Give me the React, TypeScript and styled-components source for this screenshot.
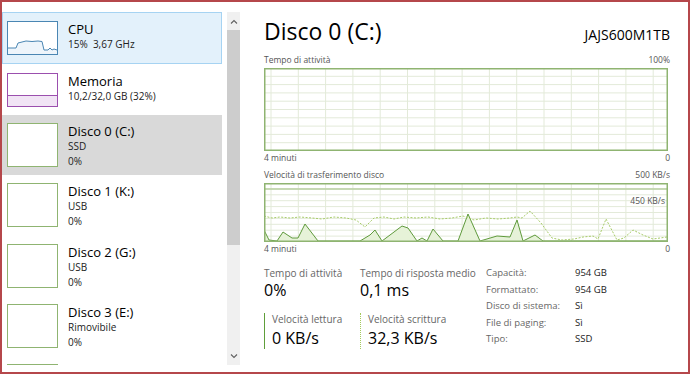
import React from "react";
import styled, { createGlobalStyle } from "styled-components";

const GlobalStyle = createGlobalStyle`
  html, body {
    margin: 0;
    padding: 0;
    background: #ffffff;
  }
  body {
    font-family: "Open Sans", "Noto Sans", sans-serif;
    color: #000;
  }
`;

const Frame = styled.div`
  box-sizing: border-box;
  width: 690px;
  height: 374px;
  border: 2px solid #b5474b;
  display: flex;
  overflow: hidden;
  background: #fff;
`;

/* ---------- sidebar ---------- */

const Sidebar = styled.div`
  width: 240px;
  display: flex;
  padding-top: 10px;
  box-sizing: border-box;
`;

const List = styled.div`
  width: 220px;
  height: 353px;
  overflow: hidden;
  display: flex;
  flex-direction: column;
`;

const Item = styled.div<{ $state?: "hover" | "selected"; $tall?: boolean }>`
  box-sizing: border-box;
  height: ${(p) => (p.$tall ? 60.3 : 51.5)}px;
  flex-shrink: 0;
  display: flex;
  align-items: flex-start;
  gap: 10px;
  padding: ${(p) => (p.$tall ? "7px 4px" : "8px 4px")};
  border: 1px solid ${(p) => (p.$state === "hover" ? "#a6d3f2" : "transparent")};
  background: ${(p) =>
    p.$state === "hover" ? "#e3f1fb" : p.$state === "selected" ? "#d9d9d9" : "transparent"};
`;

const Thumb = styled.div<{ $color: string; $tall?: boolean }>`
  box-sizing: border-box;
  width: 51px;
  height: ${(p) => (p.$tall ? 44 : 34)}px;
  flex-shrink: 0;
  border: 1px solid ${(p) => p.$color};
  background: #fff;
  position: relative;
  overflow: hidden;
  display: flex;
  flex-direction: column;
  justify-content: flex-end;
`;

const MemFill = styled.div`
  height: 10px;
  border-top: 1px solid #9b4fae;
  background: #f1e4f5;
`;

const ItemText = styled.div`
  display: flex;
  flex-direction: column;
`;

const ItemName = styled.div`
  font-size: 13px;
  line-height: 16px;
  color: #000;
`;

const ItemSub = styled.div`
  font-size: 10px;
  line-height: 15px;
  color: #222;
`;

const Scrollbar = styled.div`
  margin-left: 5px;
  width: 13px;
  height: 353px;
  background: #f0f0f0;
  display: flex;
  flex-direction: column;
  align-items: center;
`;

const ScrollArrow = styled.div`
  height: 18px;
  width: 13px;
  display: flex;
  align-items: center;
  justify-content: center;
  flex-shrink: 0;
`;

const ScrollThumb = styled.div`
  width: 13px;
  height: 215px;
  background: #cdcdcd;
  flex-shrink: 0;
`;

const ScrollTrack = styled.div`
  flex: 1;
`;

/* ---------- main ---------- */

const Main = styled.div`
  flex: 1;
  padding: 0 18px 0 22px;
  display: flex;
  flex-direction: column;
`;

const Header = styled.div`
  display: flex;
  justify-content: space-between;
  align-items: baseline;
  margin-top: 14px;
  height: 34px;
`;

const Title = styled.div`
  font-size: 23px;
  line-height: 30px;
  color: #000;
`;

const Model = styled.div`
  font-size: 14px;
  color: #000;
`;

const Caption = styled.div<{ $gap?: number }>`
  display: flex;
  justify-content: space-between;
  font-size: 8.5px;
  line-height: 12px;
  color: #555;
  margin-top: ${(p) => p.$gap ?? 0}px;
`;

const Graph = styled.div<{ $h: number }>`
  position: relative;
  width: 404px;
  height: ${(p) => p.$h}px;
  margin: 2px 0 1px;
`;

const GraphMark = styled.div`
  position: absolute;
  right: 3px;
  top: 12px;
  font-size: 8.5px;
  color: #555;
`;

const Stats = styled.div`
  display: grid;
  grid-template-columns: 96px 126px 1fr;
  margin-top: 12px;
`;

const StatCol = styled.div`
  display: flex;
  flex-direction: column;
`;

const StatLabel = styled.div`
  font-size: 10px;
  line-height: 12px;
  color: #666;
`;

const StatValue = styled.div`
  font-size: 16px;
  line-height: 22px;
  color: #000;
`;

const Speed = styled.div<{ $dotted?: boolean }>`
  margin-top: 12px;
  padding-left: 7px;
  border-left: 1.5px ${(p) => (p.$dotted ? "dotted #a4c95c" : "solid #5f9e3a")};
  height: 36px;
  display: flex;
  flex-direction: column;
  justify-content: space-between;
`;

const Props = styled.div`
  display: grid;
  grid-template-columns: 89px 1fr;
  grid-auto-rows: 16.5px;
  font-size: 9.5px;
  line-height: 12px;
`;

const PropKey = styled.div`
  color: #666;
`;

const PropVal = styled.div`
  color: #222;
`;

/* ---------- drawings ---------- */

const Grid: React.FC<{ w: number; h: number; rows: number }> = ({ w, h, rows }) => {
  const v: number[] = [];
  for (let x = 7; x < w; x += 27.3) v.push(x);
  const hz: number[] = [];
  for (let i = 1; i < rows; i++) hz.push((h / rows) * i);
  return (
    <g stroke="#e3ead9" strokeWidth={1}>
      {v.map((x) => (
        <line key={"v" + x} x1={x} y1={0} x2={x} y2={h} />
      ))}
      {hz.map((y) => (
        <line key={"h" + y} x1={0} y1={y} x2={w} y2={y} />
      ))}
    </g>
  );
};

const ActivityChart = () => (
  <svg width={404} height={83} style={{ display: "block" }}>
    <Grid w={404} h={83} rows={10} />
    <rect x={0.75} y={0.75} width={402.5} height={81.5} fill="none" stroke="#8fb471" strokeWidth={1.5} />
  </svg>
);

const writePts: [number, number][] = [
  [0, 33], [8, 35], [16, 34], [26, 35], [36, 34], [48, 35], [58, 36], [70, 34], [82, 35], [92, 37],
  [101, 44], [110, 35], [120, 34], [130, 36], [140, 34], [152, 35], [164, 34], [176, 36], [188, 35],
  [199, 33], [210, 37], [222, 35], [234, 36], [246, 35], [253, 34], [258, 35], [266, 28], [277, 40],
  [288, 55], [298, 57], [310, 56], [319, 54], [329, 53], [334, 56], [342, 36], [353, 57], [360, 55],
  [369, 47], [379, 52], [389, 56], [396, 55], [403, 54],
];

const readPts: [number, number][] = [
  [0, 47], [5, 57], [13, 58], [19, 49], [28, 55], [34, 55], [41, 41], [54, 58], [96, 58], [106, 52],
  [111, 47], [118, 58], [138, 43], [144, 45], [153, 58], [158, 55], [163, 58], [169, 46], [179, 58],
  [194, 58], [204, 31], [216, 58], [233, 53], [246, 54], [253, 37], [259, 58], [271, 52], [279, 58],
  [403, 58],
];

const toPath = (pts: [number, number][]) => pts.map(([x, y], i) => `${i ? "L" : "M"}${x} ${y}`).join(" ");

const TransferChart = () => (
  <svg width={404} height={59} style={{ display: "block" }}>
    <Grid w={404} h={59} rows={10} />
    <line x1={0} y1={6} x2={404} y2={6} stroke="#b9cfa2" strokeWidth={1.5} />
    <path d={toPath(readPts) + " L403 58 L0 58 Z"} fill="#e6f2d8" stroke="none" />
    <path d={toPath(readPts)} fill="none" stroke="#5f9a3c" strokeWidth={1} />
    <path d={toPath(writePts)} fill="none" stroke="#a8cc6a" strokeWidth={1} strokeDasharray="2 1.5" />
    <rect x={0.75} y={0.75} width={402.5} height={57.5} fill="none" stroke="#8fb471" strokeWidth={1.5} />
  </svg>
);

const CpuSpark = () => (
  <svg width={49} height={32} style={{ position: "absolute", left: 0, top: 0 }}>
    <path d="M0 26 L8 26 L10 21 L14 20 L18 19 L24 19.5 L30 19 L34 19.5 L36 28 L40 28 L42 26 L44 28 L46 27 L49 28 L49 32 L0 32 Z" fill="#eef5fb" />
    <path d="M0 26 L8 26 L10 21 L14 20 L18 19 L24 19.5 L30 19 L34 19.5 L36 28 L40 28 L42 26 L44 28 L46 27 L49 28" fill="none" stroke="#4a86b3" strokeWidth={1} />
  </svg>
);

const Chevron: React.FC<{ up?: boolean }> = ({ up }) => (
  <svg width={8} height={5} viewBox="0 0 8 5">
    <path d={up ? "M1 4.5 L4 1.5 L7 4.5" : "M1 0.5 L4 3.5 L7 0.5"} fill="none" stroke="#606060" strokeWidth={1.1} />
  </svg>
);

const disks = [
  { name: "Disco 0 (C:)", type: "SSD", selected: true },
  { name: "Disco 1 (K:)", type: "USB" },
  { name: "Disco 2 (G:)", type: "USB" },
  { name: "Disco 3 (E:)", type: "Rimovibile" },
];

const props: [string, string][] = [
  ["Capacità:", "954 GB"],
  ["Formattato:", "954 GB"],
  ["Disco di sistema:", "Sì"],
  ["File di paging:", "Sì"],
  ["Tipo:", "SSD"],
];

export default function App() {
  return (
    <>
      <GlobalStyle />
      <Frame>
        <Sidebar>
          <List>
            <Item $state="hover">
              <Thumb $color="#4a86b3">
                <CpuSpark />
              </Thumb>
              <ItemText>
                <ItemName>CPU</ItemName>
                <ItemSub>15%&nbsp; 3,67 GHz</ItemSub>
              </ItemText>
            </Item>
            <Item>
              <Thumb $color="#9b4fae">
                <MemFill />
              </Thumb>
              <ItemText>
                <ItemName>Memoria</ItemName>
                <ItemSub>10,2/32,0 GB (32%)</ItemSub>
              </ItemText>
            </Item>
            {disks.map((d) => (
              <Item key={d.name} $tall $state={d.selected ? "selected" : undefined}>
                <Thumb $color="#8fb471" $tall />
                <ItemText>
                  <ItemName>{d.name}</ItemName>
                  <ItemSub>{d.type}</ItemSub>
                  <ItemSub>0%</ItemSub>
                </ItemText>
              </Item>
            ))}
            {/* next disk, scrolled out of view except for its thumbnail edge */}
            <Item $tall>
              <Thumb $color="#8fb471" $tall />
            </Item>
          </List>
          <Scrollbar>
            <ScrollArrow>
              <Chevron up />
            </ScrollArrow>
            <ScrollThumb />
            <ScrollTrack />
            <ScrollArrow>
              <Chevron />
            </ScrollArrow>
          </Scrollbar>
        </Sidebar>
        <Main>
          <Header>
            <Title>Disco 0 (C:)</Title>
            <Model>JAJS600M1TB</Model>
          </Header>
          <Caption $gap={4}>
            <span>Tempo di attività</span>
            <span>100%</span>
          </Caption>
          <Graph $h={83}>
            <ActivityChart />
          </Graph>
          <Caption>
            <span>4 minuti</span>
            <span>0</span>
          </Caption>
          <Caption $gap={5}>
            <span>Velocità di trasferimento disco</span>
            <span>500 KB/s</span>
          </Caption>
          <Graph $h={59}>
            <TransferChart />
            <GraphMark>450 KB/s</GraphMark>
          </Graph>
          <Caption>
            <span>4 minuti</span>
            <span>0</span>
          </Caption>
          <Stats>
            <StatCol>
              <StatLabel>Tempo di attività</StatLabel>
              <StatValue>0%</StatValue>
              <Speed>
                <StatLabel>Velocità lettura</StatLabel>
                <StatValue>0 KB/s</StatValue>
              </Speed>
            </StatCol>
            <StatCol>
              <StatLabel>Tempo di risposta medio</StatLabel>
              <StatValue>0,1 ms</StatValue>
              <Speed $dotted>
                <StatLabel>Velocità scrittura</StatLabel>
                <StatValue>32,3 KB/s</StatValue>
              </Speed>
            </StatCol>
            <Props>
              {props.map(([k, v]) => (
                <React.Fragment key={k}>
                  <PropKey>{k}</PropKey>
                  <PropVal>{v}</PropVal>
                </React.Fragment>
              ))}
            </Props>
          </Stats>
        </Main>
      </Frame>
    </>
  );
}
